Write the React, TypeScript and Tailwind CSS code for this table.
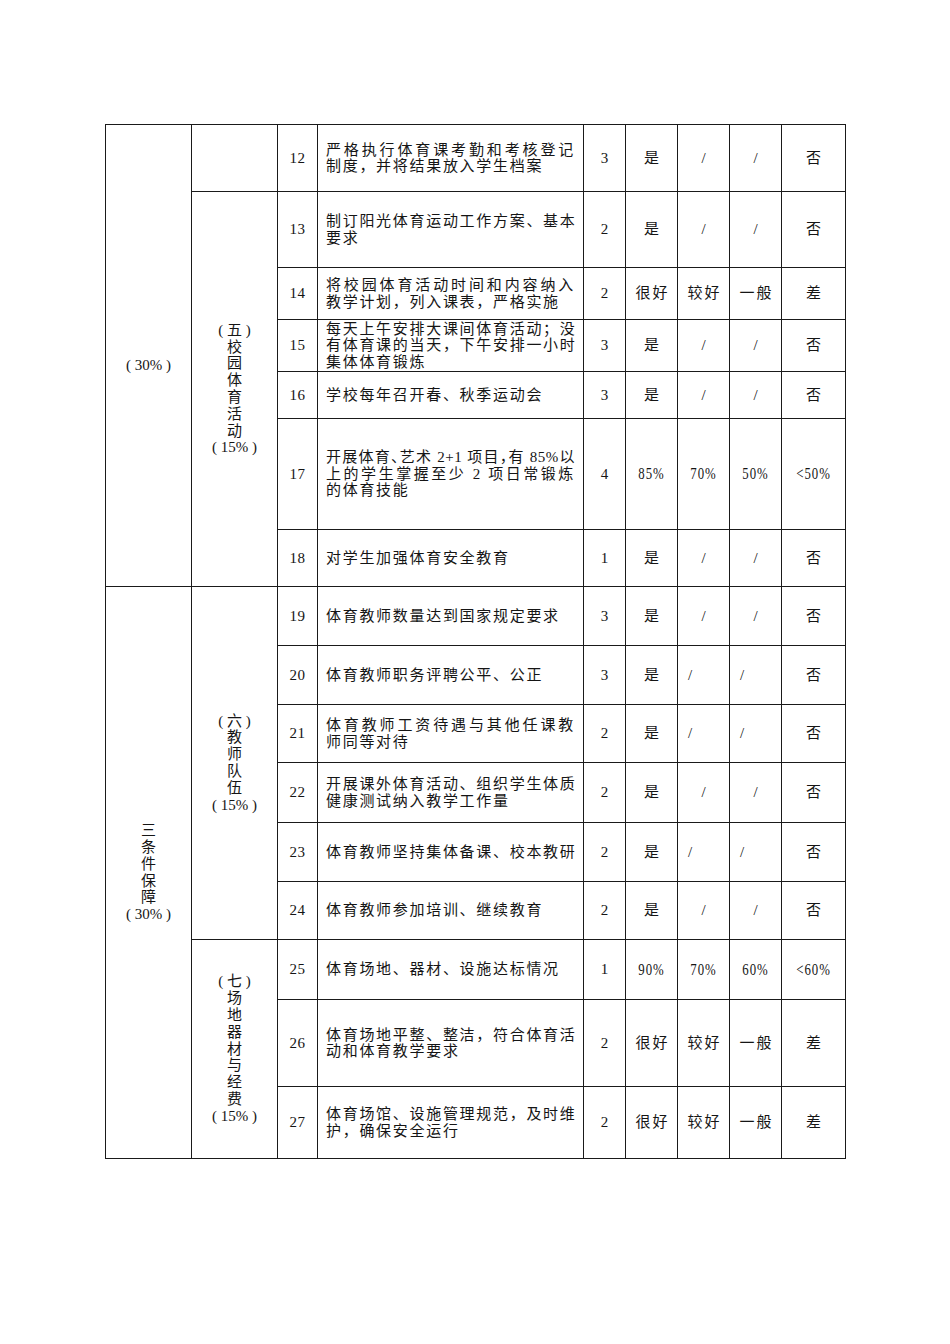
import React from "react";

type Row = {
  n: number;
  text: string[];
  s: number;
  v: [string, string, string, string];
  leftSlash?: boolean;
  tight?: boolean;
};

const rows: Row[] = [
  { n: 12, text: ["严格执行体育课考勤和考核登记", "制度，并将结果放入学生档案"], s: 3, v: ["是", "/", "/", "否"] },
  { n: 13, text: ["制订阳光体育运动工作方案、基本", "要求"], s: 2, v: ["是", "/", "/", "否"] },
  { n: 14, text: ["将校园体育活动时间和内容纳入", "教学计划，列入课表，严格实施"], s: 2, v: ["很好", "较好", "一般", "差"] },
  { n: 15, text: ["每天上午安排大课间体育活动；没", "有体育课的当天，下午安排一小时", "集体体育锻炼"], s: 3, v: ["是", "/", "/", "否"] },
  { n: 16, text: ["学校每年召开春、秋季运动会"], s: 3, v: ["是", "/", "/", "否"] },
  { n: 17, text: ["开展体育、艺术 2+1 项目，有 85%以", "上的学生掌握至少 2 项日常锻炼", "的体育技能"], s: 4, v: ["85%", "70%", "50%", "<50%"], tight: true },
  { n: 18, text: ["对学生加强体育安全教育"], s: 1, v: ["是", "/", "/", "否"] },
  { n: 19, text: ["体育教师数量达到国家规定要求"], s: 3, v: ["是", "/", "/", "否"] },
  { n: 20, text: ["体育教师职务评聘公平、公正"], s: 3, v: ["是", "/", "/", "否"], leftSlash: true },
  { n: 21, text: ["体育教师工资待遇与其他任课教", "师同等对待"], s: 2, v: ["是", "/", "/", "否"], leftSlash: true },
  { n: 22, text: ["开展课外体育活动、组织学生体质", "健康测试纳入教学工作量"], s: 2, v: ["是", "/", "/", "否"] },
  { n: 23, text: ["体育教师坚持集体备课、校本教研"], s: 2, v: ["是", "/", "/", "否"], leftSlash: true },
  { n: 24, text: ["体育教师参加培训、继续教育"], s: 2, v: ["是", "/", "/", "否"] },
  { n: 25, text: ["体育场地、器材、设施达标情况"], s: 1, v: ["90%", "70%", "60%", "<60%"] },
  { n: 26, text: ["体育场地平整、整洁，符合体育活", "动和体育教学要求"], s: 2, v: ["很好", "较好", "一般", "差"] },
  { n: 27, text: ["体育场馆、设施管理规范，及时维", "护，确保安全运行"], s: 2, v: ["很好", "较好", "一般", "差"] },
];

const cell = "border-r border-b border-[#1a1a1a] flex items-center";

function VLabel({ chars }: { chars: string[] }) {
  return (
    <div className="flex flex-col items-center leading-[16.8px] text-[15px]">
      {chars.map((c, i) => (
        <span key={i} className="whitespace-pre">
          {c}
        </span>
      ))}
    </div>
  );
}

function isNum(s: string) {
  return /[0-9%]/.test(s);
}

function RowCells({ r }: { r: Row }) {
  return (
    <>
      <div className={`${cell} justify-center text-[15px] tracking-[0.5px]`}>{r.n}</div>
      <div className={`${cell} pl-[8px] pr-[8px]`}>
        <div className="w-full text-[15px] leading-[16.5px] tracking-[1.7px]">
          {r.text.map((t, i) => {
            const last = i === r.text.length - 1;
            const tightLine = r.tight && i === 0;
            return (
              <div
                key={i}
                className={`whitespace-nowrap ${
                  last ? "text-left" : "text-justify [text-align-last:justify]"
                } ${tightLine ? "tracking-[0.5px] [font-feature-settings:'halt']" : ""}`}
              >
                {t}
              </div>
            );
          })}
        </div>
      </div>
      <div className={`${cell} justify-center text-[15px]`}>{r.s}</div>
      {r.v.map((x, i) => {
        const slashLeft = r.leftSlash && (i === 1 || i === 2);
        const numeric = isNum(x);
        return (
          <div
            key={i}
            className={`${cell} ${slashLeft ? "justify-start pl-[10px]" : "justify-center"} ${
              x === "/" ? "text-[15px]" : numeric ? "text-[16px]" : "text-[15px] tracking-[2px] pl-[2px]"
            }`}
          >
            {numeric ? (
              <span className="inline-block scale-x-80 tracking-[1.2px]">{x}</span>
            ) : (
              x
            )}
          </div>
        );
      })}
    </>
  );
}

export default function App() {
  return (
    <div className="min-h-[1344px] w-[950px] bg-white pt-[124px] pl-[105px] text-[#151515] font-['Liberation_Serif','Noto_Sans_CJK_SC',serif]">
      <div className="grid w-fit grid-cols-[86px_86px_40px_266px_42px_52px_52px_52px_64px] grid-rows-[67px_76px_52px_52px_47px_111px_57px_59px_59px_58px_60px_59px_58px_60px_87px_72px] border-t border-l border-[#1a1a1a]">
        {/* row 12 */}
        <div className={`${cell} row-span-7 justify-center pt-[20px]`}>
          <VLabel chars={["( 30% )"]} />
        </div>
        <div className={`${cell}`} />
        <RowCells r={rows[0]} />
        {/* row 13 */}
        <div className={`${cell} row-span-6 justify-center`}>
          <VLabel chars={["( 五 )", "校", "园", "体", "育", "活", "动", "( 15% )"]} />
        </div>
        <RowCells r={rows[1]} />
        <RowCells r={rows[2]} />
        <RowCells r={rows[3]} />
        <RowCells r={rows[4]} />
        <RowCells r={rows[5]} />
        <RowCells r={rows[6]} />
        {/* row 19 */}
        <div className={`${cell} row-span-9 justify-center`}>
          <VLabel chars={["三", "条", "件", "保", "障", "( 30% )"]} />
        </div>
        <div className={`${cell} row-span-6 justify-center`}>
          <VLabel chars={["( 六 )", "教", "师", "队", "伍", "( 15% )"]} />
        </div>
        <RowCells r={rows[7]} />
        <RowCells r={rows[8]} />
        <RowCells r={rows[9]} />
        <RowCells r={rows[10]} />
        <RowCells r={rows[11]} />
        <RowCells r={rows[12]} />
        {/* row 25 */}
        <div className={`${cell} row-span-3 justify-center`}>
          <VLabel chars={["( 七 )", "场", "地", "器", "材", "与", "经", "费", "( 15% )"]} />
        </div>
        <RowCells r={rows[13]} />
        <RowCells r={rows[14]} />
        <RowCells r={rows[15]} />
      </div>
    </div>
  );
}
